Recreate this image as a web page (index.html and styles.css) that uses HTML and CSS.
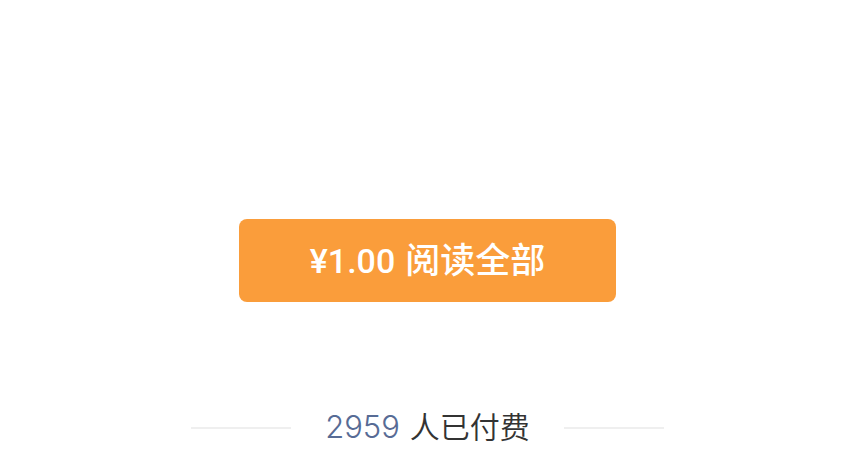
FILE: index.html
```html
<!DOCTYPE html>
<html lang="zh-CN">
<head>
<meta charset="utf-8">
<meta name="viewport" content="width=device-width, initial-scale=1">
<title>付费阅读</title>
<link rel="stylesheet" href="styles.css">
</head>
<body>
<main class="paywall">
  <button class="pay-button" type="button"><span class="label"><span class="price">¥1.00</span><span>阅读全部</span></span></button>
  <p class="paid-count"><span class="label"><span class="count">2959</span><span>人已付费</span></span></p>
</main>
</body>
</html>
```

FILE: styles.css
```css
body {
  margin: 0;
  background: #fff;
  font-family: "Noto Sans CJK SC", sans-serif;
}

.paywall {
  display: flex;
  flex-direction: column;
  align-items: center;
  padding-top: 219px;
}

.label {
  display: flex;
  align-items: baseline;
  gap: 10px;
}

.pay-button {
  display: flex;
  justify-content: center;
  align-items: center;
  width: 44%;
  height: 83px;
  padding: 0 0 2px;
  border: 0;
  border-radius: 8px;
  background: #fa9d3b;
  color: #fff;
  font-family: inherit;
  font-size: 35px;
  font-weight: 500;
  line-height: 48px;
  white-space: nowrap;
}

.price {
  font-family: Roboto, "Noto Sans CJK SC", sans-serif;
  font-size: 34px;
}

.paid-count {
  display: flex;
  align-items: center;
  gap: 34px;
  margin: 101px 0 0;
  color: #333;
  font-size: 30px;
  font-weight: 350;
  line-height: 44px;
  white-space: nowrap;
}

.paid-count .label {
  padding-bottom: 4px;
}

.paid-count::before,
.paid-count::after {
  content: "";
  width: 100px;
  height: 2px;
  background: #efefef;
}

.count {
  color: #576b95;
  font-family: Inter, sans-serif;
  font-size: 31px;
}
```
